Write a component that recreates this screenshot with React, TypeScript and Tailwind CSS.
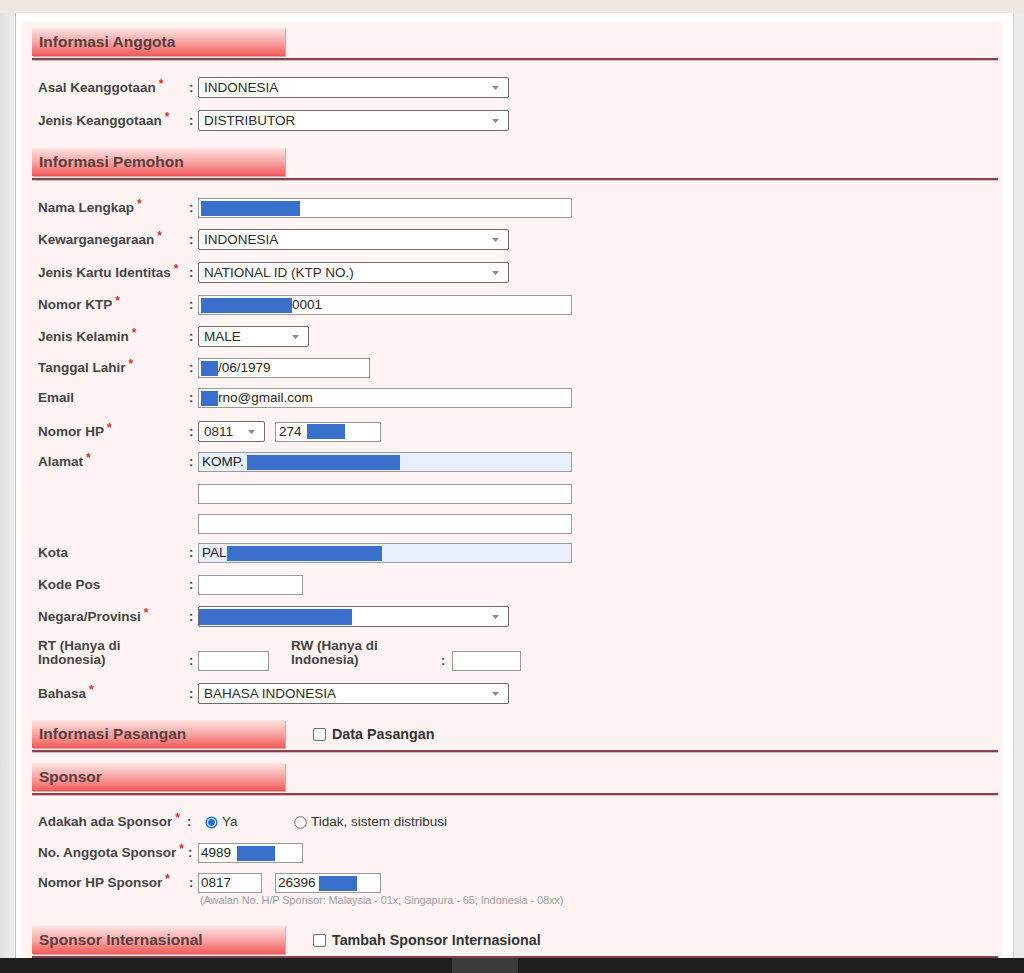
import React from 'react';
import clsx from 'clsx';

// --- small pieces -----------------------------------------------------------

function Req() {
  return <span className="relative -top-[4px] ml-[3px] text-[12px] font-bold text-[#d8312f]">*</span>;
}

function Label({ text, req, className }: { text: React.ReactNode; req?: boolean; className?: string }) {
  return (
    <div
      className={clsx(
        'whitespace-nowrap text-[13.5px] font-bold text-[#454545]',
        className ?? 'min-w-[151px] leading-[20px]',
      )}
    >
      {text}
      {req && <Req />}
    </div>
  );
}

function Colon({ className }: { className?: string }) {
  return (
    <div className={clsx('flex h-[20px] items-center text-[13px] font-bold text-[#454545]', className ?? 'w-[9px]')}>:</div>
  );
}

function Arrow() {
  return (
    <svg width="7" height="4" viewBox="0 0 7 4" className="shrink-0">
      <polygon points="0,0 7,0 3.5,4" fill="#8a8a8a" />
    </svg>
  );
}

function Select({ w, children }: { w: string; children: React.ReactNode }) {
  return (
    <div
      className={clsx(
        'flex h-[21px] items-center justify-between rounded-[2px] border border-[#6c6c6c] bg-white pl-[5px] pr-[9px] text-[13.5px] leading-[19px] text-[#2d2d2d]',
        w,
      )}
    >
      <div className="flex items-center whitespace-nowrap">{children}</div>
      <Arrow />
    </div>
  );
}

function Field({ w, fill, children }: { w: string; fill?: boolean; children?: React.ReactNode }) {
  return (
    <div
      className={clsx(
        'flex h-[20px] items-center whitespace-nowrap border border-[#9a9a9a] pl-[2px] text-[13.5px] leading-[18px] text-[#262626]',
        fill ? 'bg-[#e8f0fe]' : 'bg-white',
        w,
      )}
    >
      {children}
    </div>
  );
}

// redaction block
function Blot({ w }: { w: string }) {
  return <span className={clsx('block h-[15px] bg-[#3b6fcc]', w)} />;
}

function Checkbox() {
  return <div className="h-[13px] w-[13px] rounded-[2px] border border-[#6f6f6f] bg-white" />;
}

function Radio({ checked }: { checked?: boolean }) {
  return (
    <svg width="13" height="13" viewBox="0 0 13 13" className="shrink-0">
      {checked ? (
        <>
          <circle cx="6.5" cy="6.5" r="6" fill="#1b6fe0" />
          <circle cx="6.5" cy="6.5" r="4.6" fill="#ffffff" />
          <circle cx="6.5" cy="6.5" r="3.4" fill="#1b6fe0" />
        </>
      ) : (
        <circle cx="6.5" cy="6.5" r="5.8" fill="#ffffff" stroke="#6f6f6f" strokeWidth="1" />
      )}
    </svg>
  );
}

function Section({ title, extra, className }: { title: string; extra?: React.ReactNode; className?: string }) {
  return (
    <div className={className}>
      <div className="flex h-[28px] items-center">
        <div className="flex h-[28px] w-[253px] shrink-0 items-center bg-linear-to-b from-[#fde4e4] via-[#f8a5a5] to-[#f05656] pl-[7px] text-[15.5px] font-bold leading-[20px] text-[#5a3e3e] shadow-[1px_1px_1px_rgba(120,40,40,0.35)]">
          {title}
        </div>
        {extra}
      </div>
      <div className="mt-[2px] h-[2px] bg-[#88404a] shadow-[0_1px_0_#e6b8bc]" />
    </div>
  );
}

function HeaderCheck({ text }: { text: string }) {
  return (
    <div className="ml-[28px] flex items-center gap-[6px]">
      <Checkbox />
      <span className="text-[14.3px] font-bold leading-[20px] text-[#333]">{text}</span>
    </div>
  );
}

function Row({ className, children }: { className?: string; children: React.ReactNode }) {
  return <div className={clsx('flex items-center pl-[6px]', className)}>{children}</div>;
}

// --- page ------------------------------------------------------------------

export default function App() {
  return (
    <div className="flex h-[973px] w-[1024px] flex-col overflow-hidden bg-white font-['Liberation_Sans',Arial,sans-serif]">
      <div className="h-[13px] bg-[#efe8e2]" />

      <div className="flex min-h-0 flex-1">
        <div className="w-[16px] border-r border-[#c3c3c3] bg-linear-to-r from-[#e0e0e0] to-[#eeeeee]" />

        <div className="flex min-w-0 flex-1 flex-col bg-white pl-[6px] pr-[11px] pt-[9px]">
          <div className="flex-1 bg-[#fff3f4] pl-[10px] pr-[4px] pt-[6px]">
            {/* Informasi Anggota */}
            <Section title="Informasi Anggota" />
            <Row className="mt-[17px]">
              <Label text="Asal Keanggotaan" req />
              <Colon />
              <Select w="w-[311px]">INDONESIA</Select>
            </Row>
            <Row className="mt-[12px]">
              <Label text="Jenis Keanggotaan" req />
              <Colon />
              <Select w="w-[311px]">DISTRIBUTOR</Select>
            </Row>

            {/* Informasi Pemohon */}
            <Section title="Informasi Pemohon" className="mt-[17px]" />
            <Row className="mt-[18px]">
              <Label text="Nama Lengkap" req />
              <Colon />
              <Field w="w-[374px]">
                <Blot w="w-[99px]" />
              </Field>
            </Row>
            <Row className="mt-[11px]">
              <Label text="Kewarganegaraan" req />
              <Colon />
              <Select w="w-[311px]">INDONESIA</Select>
            </Row>
            <Row className="mt-[12px]">
              <Label text="Jenis Kartu Identitas" req />
              <Colon />
              <Select w="w-[311px]">NATIONAL ID (KTP NO.)</Select>
            </Row>
            <Row className="mt-[12px]">
              <Label text="Nomor KTP" req />
              <Colon />
              <Field w="w-[374px]">
                <Blot w="w-[91px]" />
                0001
              </Field>
            </Row>
            <Row className="mt-[11px]">
              <Label text="Jenis Kelamin" req />
              <Colon />
              <Select w="w-[111px]">MALE</Select>
            </Row>
            <Row className="mt-[11px]">
              <Label text="Tanggal Lahir" req />
              <Colon />
              <Field w="w-[172px]">
                <Blot w="w-[17px]" />
                /06/1979
              </Field>
            </Row>
            <Row className="mt-[10px]">
              <Label text="Email" />
              <Colon />
              <Field w="w-[374px]">
                <Blot w="w-[17px]" />
                rno@gmail.com
              </Field>
            </Row>
            <Row className="mt-[13px]">
              <Label text="Nomor HP" req />
              <Colon />
              <Select w="w-[67px]">0811</Select>
              <div className="ml-[10px]">
                <Field w="w-[106px]">
                  <span className="pl-[1px]">274</span>
                  <Blot w="w-[38px] ml-[5px]" />
                </Field>
              </div>
            </Row>
            <Row className="mt-[10px]">
              <Label text="Alamat" req />
              <Colon />
              <Field w="w-[374px]" fill>
                <span className="pl-[1px] text-[#1a1a1a]">KOMP.</span>
                <Blot w="w-[153px] ml-[3px]" />
              </Field>
            </Row>
            <Row className="mt-[12px]">
              <div className="w-[160px]" />
              <Field w="w-[374px]" />
            </Row>
            <Row className="mt-[10px]">
              <div className="w-[160px]" />
              <Field w="w-[374px]" />
            </Row>
            <Row className="mt-[9px]">
              <Label text="Kota" />
              <Colon />
              <Field w="w-[374px]" fill>
                <span className="pl-[1px] text-[#1a1a1a]">PAL</span>
                <Blot w="w-[155px]" />
              </Field>
            </Row>
            <Row className="mt-[12px]">
              <Label text="Kode Pos" />
              <Colon />
              <Field w="w-[105px]" />
            </Row>
            <Row className="mt-[11px]">
              <Label text="Negara/Provinsi" req />
              <Colon />
              <Select w="w-[311px]">
                <Blot w="w-[153px] -ml-[5px] h-[16px]" />
              </Select>
            </Row>
            <div className="mt-[12px] flex items-end pl-[6px]">
              <Label
                className="min-w-[151px] pb-[4px] leading-[14px]"
                text={
                  <>
                    RT (Hanya di
                    <br />
                    Indonesia)
                  </>
                }
              />
              <Colon />
              <Field w="w-[71px]" />
              <Label
                className="ml-[22px] min-w-[150px] pb-[4px] leading-[14px]"
                text={
                  <>
                    RW (Hanya di
                    <br />
                    Indonesia)
                  </>
                }
              />
              <Colon className="w-[11px]" />
              <Field w="w-[69px]" />
            </div>
            <Row className="mt-[12px]">
              <Label text="Bahasa" req />
              <Colon />
              <Select w="w-[311px]">BAHASA INDONESIA</Select>
            </Row>

            {/* Informasi Pasangan */}
            <Section title="Informasi Pasangan" className="mt-[16px]" extra={<HeaderCheck text="Data Pasangan" />} />

            {/* Sponsor */}
            <Section title="Sponsor" className="mt-[11px]" />
            <Row className="mt-[17px] h-[20px]">
              <Label text="Adakah ada Sponsor" req className="min-w-[151px] leading-[20px]" />
              <Colon className="w-[9px] -ml-[2px] mr-[2px]" />
              <div className="flex w-[96px] items-center gap-[4px] pl-[7px]">
                <Radio checked />
                <span className="text-[13.5px] leading-[20px] text-[#333]">Ya</span>
              </div>
              <div className="flex items-center gap-[4px]">
                <Radio />
                <span className="text-[13.5px] leading-[20px] text-[#333]">Tidak, sistem distribusi</span>
              </div>
            </Row>
            <Row className="mt-[11px]">
              <Label text="No. Anggota Sponsor" req className="min-w-[151px] leading-[20px]" />
              <Colon className="w-[9px] -ml-[1px] mr-[1px]" />
              <Field w="w-[105px]">
                <span>4989</span>
                <Blot w="w-[38px] ml-[6px]" />
              </Field>
            </Row>
            <Row className="mt-[10px]">
              <Label text="Nomor HP Sponsor" req />
              <Colon />
              <Field w="w-[64px]">0817</Field>
              <div className="ml-[13px]">
                <Field w="w-[106px]">
                  <span>26396</span>
                  <Blot w="w-[38px] ml-[3px]" />
                </Field>
              </div>
            </Row>
            <div className="mt-[1px] pl-[168px] text-[11px] leading-[12px] tracking-[-0.1px] text-[#a0a0a0]">
              (Awalan No. H/P Sponsor: Malaysia - 01x; Singapura - 65; Indonesia - 08xx)
            </div>

            {/* Sponsor Internasional */}
            <Section
              title="Sponsor Internasional"
              className="mt-[20px]"
              extra={<HeaderCheck text="Tambah Sponsor Internasional" />}
            />
          </div>
        </div>

        <div className="w-[11px] border-l border-[#cfcfcf] bg-[#ebebeb]" />
      </div>

      <div className="flex h-[15px] shrink-0 bg-[#1e1e1e]">
        <div className="ml-[452px] w-[66px] bg-[#3b3b3b]" />
      </div>
    </div>
  );
}
